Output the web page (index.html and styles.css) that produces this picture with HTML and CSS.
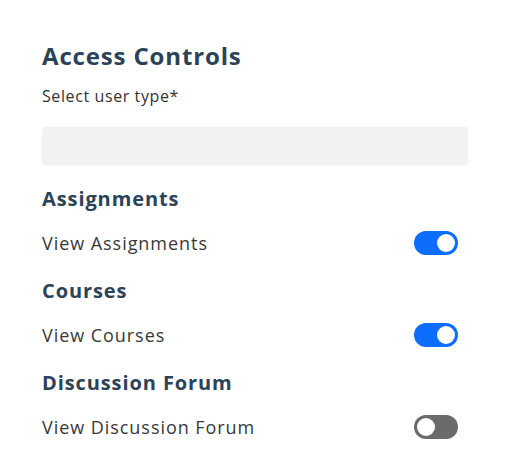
FILE: index.html
```html
<!DOCTYPE html>
<html>
<head>
<meta charset="utf-8">
<link rel="stylesheet" href="styles.css">
</head>
<body>
<div class="panel">
  <h1 class="title">Access Controls</h1>
  <label class="field-label">Select user type*</label>
  <div class="select"></div>

  <section class="group">
    <h2 class="group-title">Assignments</h2>
    <div class="row">
      <span class="row-label">View Assignments</span>
      <span class="toggle on"><span class="knob"></span></span>
    </div>
  </section>

  <section class="group">
    <h2 class="group-title">Courses</h2>
    <div class="row">
      <span class="row-label">View Courses</span>
      <span class="toggle on"><span class="knob"></span></span>
    </div>
  </section>

  <section class="group">
    <h2 class="group-title">Discussion Forum</h2>
    <div class="row">
      <span class="row-label">View Discussion Forum</span>
      <span class="toggle off"><span class="knob"></span></span>
    </div>
  </section>
</div>
</body>
</html>
```

FILE: styles.css
```css
html, body {
  margin: 0;
  padding: 0;
  background: #ffffff;
}
body {
  font-family: "Open Sans", "Noto Sans", sans-serif;
  color: #333333;
}
.panel {
  width: 426px;
  padding: 40px 0 0 42px;
}
.title {
  margin: 0;
  font-size: 24px;
  line-height: 32px;
  font-weight: 700;
  letter-spacing: 0.85px;
  color: #2b4257;
}
.field-label {
  display: block;
  margin-top: 14px;
  font-size: 16px;
  line-height: 20px;
  letter-spacing: 0.6px;
  color: #333;
}
.select {
  margin-top: 21px;
  height: 38px;
  background: #f2f2f2;
  border-radius: 4px;
  box-shadow: 0 0 2px rgba(0,0,0,0.06);
}
.group {
  margin-top: 22px;
}
.group + .group {
  margin-top: 24px;
}
.group-title {
  margin: 0;
  font-size: 20px;
  line-height: 24px;
  font-weight: 700;
  letter-spacing: 0.9px;
  color: #2b4257;
}
.row {
  display: flex;
  align-items: center;
  justify-content: space-between;
  margin-top: 20px;
  padding-right: 10px;
  height: 24px;
}
.row-label {
  font-size: 18px;
  letter-spacing: 0.95px;
  color: #383838;
}
.toggle {
  display: flex;
  align-items: center;
  width: 44px;
  height: 24px;
  border-radius: 12px;
  box-sizing: border-box;
  padding: 3px;
}
.toggle.on {
  background: #0d6efd;
  justify-content: flex-end;
}
.toggle.off {
  background: #6b6b6b;
  justify-content: flex-start;
}
.knob {
  width: 18px;
  height: 18px;
  border-radius: 50%;
  background: #fff;
}
```
